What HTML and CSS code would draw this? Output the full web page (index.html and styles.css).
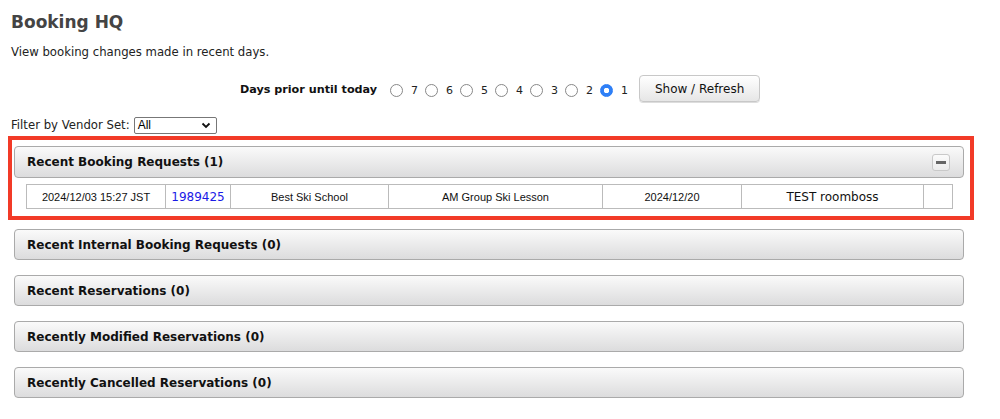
FILE: index.html
```html
<!DOCTYPE html>
<html>
<head>
<meta charset="utf-8">
<title>Booking HQ</title>
<link rel="stylesheet" href="styles.css">
</head>
<body>
<h1 class="title">Booking HQ</h1>
<p class="desc">View booking changes made in recent days.</p>

<form class="days-row">
  <span class="days-label">Days prior until today</span>
  <label class="opt"><span class="radio"></span>7</label>
  <label class="opt"><span class="radio"></span>6</label>
  <label class="opt"><span class="radio"></span>5</label>
  <label class="opt"><span class="radio"></span>4</label>
  <label class="opt"><span class="radio"></span>3</label>
  <label class="opt"><span class="radio"></span>2</label>
  <label class="opt"><span class="radio checked"></span>1</label>
  <span class="btn">Show / Refresh</span>
</form>

<div class="filter">
  <span>Filter by Vendor Set:</span>
  <span class="select"><span class="select-val">All</span><svg class="chev" width="10" height="7" viewBox="0 0 10 7"><path d="M1.5 1.5 L5 5 L8.5 1.5" fill="none" stroke="#111" stroke-width="1.8"/></svg></span>
</div>

<div class="highlight">
  <div class="panel">
    <div class="panel-head first">
      <span>Recent Booking Requests (1)</span>
      <span class="toggle"><span class="dash"></span></span>
    </div>
    <table class="rows">
      <tr>
        <td class="c1">2024/12/03 15:27 JST</td>
        <td class="c2"><a href="#">1989425</a></td>
        <td class="c3">Best Ski School</td>
        <td class="c4">AM Group Ski Lesson</td>
        <td class="c5">2024/12/20</td>
        <td class="c6 big">TEST roomboss</td>
        <td class="c7"></td>
      </tr>
    </table>
  </div>
</div>

<div class="panels">
  <div class="panel-head">Recent Internal Booking Requests (0)</div>
  <div class="panel-head">Recent Reservations (0)</div>
  <div class="panel-head">Recently Modified Reservations (0)</div>
  <div class="panel-head">Recently Cancelled Reservations (0)</div>
</div>
</body>
</html>
```

FILE: styles.css
```css
body {
  margin: 8px;
  font-family: "DejaVu Sans", sans-serif;
  font-size: 11.7px;
  color: #222;
  background: #fff;
}
.title {
  font-size: 17px;
  font-weight: bold;
  color: #444;
  margin: 3px 0 0 3px;
  line-height: 22px;
}
.desc {
  margin: 12px 0 0 3px;
  line-height: 14px;
  color: #222;
}
.days-row {
  display: flex;
  justify-content: center;
  align-items: center;
  margin: 16px 0 0 0;
  height: 27px;
}
.days-label {
  font-weight: bold;
  font-size: 11.2px;
  margin-right: 13px;
  margin-top: 2px;
  color: #111;
}
.opt {
  display: flex;
  align-items: center;
  margin-top: 3px;
  width: 35px;
  font-size: 11px;
}
.radio {
  width: 11px;
  height: 11px;
  border: 1px solid #888;
  border-radius: 50%;
  margin-right: 8px;
  background: #fff;
  box-sizing: content-box;
}
.radio.checked {
  border-color: #2a7cf6;
  background: radial-gradient(circle, #fff 0 2.5px, #2f80f7 3px);
}
.btn {
  display: inline-flex;
  align-items: center;
  justify-content: center;
  width: 119px;
  height: 25px;
  border: 1px solid #c8c8c8;
  border-radius: 4px;
  background: linear-gradient(#ffffff, #e6e6e6);
  font-size: 12px;
  color: #111;
  margin-left: 4px;
  box-shadow: 0 1px 0 #ddd;
}
.filter {
  display: flex;
  align-items: center;
  margin: 14px 0 0 3px;
  height: 18px;
}
.select {
  display: inline-flex;
  align-items: center;
  justify-content: space-between;
  box-sizing: border-box;
  width: 83px;
  height: 17px;
  border: 1px solid #777;
  border-radius: 2px;
  margin-left: 4px;
  padding: 0 5px 0 3px;
  font-family: "Liberation Sans", sans-serif;
  font-size: 12px;
  color: #000;
}
.highlight {
  width: 956px;
  border: 4px solid #f23a27;
  padding: 6px 0 7px 2px;
  margin-top: 2px;
}
.panel-head {
  box-sizing: border-box;
  width: 950px;
  height: 31px;
  border: 1px solid #aaa;
  border-radius: 4px;
  background: linear-gradient(#fafafa, #dcdcdd);
  display: flex;
  align-items: center;
  justify-content: space-between;
  padding: 0 13px 0 12px;
  font-weight: bold;
  font-size: 12px;
  color: #111;
}
.panel-head.first {
  height: 32px;
}
.toggle {
  width: 16px;
  height: 15px;
  border: 1px solid #c9c9c9;
  border-radius: 3px;
  background: linear-gradient(#fbfbfb, #ececec);
  display: flex;
  align-items: center;
  justify-content: center;
}
.dash {
  width: 10px;
  height: 3px;
  background: #666;
}
.rows {
  border-collapse: collapse;
  table-layout: fixed;
  margin: 6px 0 0 12px;
  width: 926px;
  font-family: "Liberation Sans", sans-serif;
  font-size: 11px;
  color: #111;
}
.rows td {
  border: 1px solid #bbb;
  height: 23px;
  padding: 0;
  text-align: center;
}
.rows a {
  color: #1a1ae6;
  text-decoration: none;
  font-family: "DejaVu Sans", sans-serif;
  font-size: 12px;
}
.rows .big {
  font-family: "DejaVu Sans", sans-serif;
  font-size: 12px;
}
.c1 { width: 138px; }
.c2 { width: 64px; }
.c3 { width: 157px; }
.c4 { width: 213px; }
.c5 { width: 138px; }
.c6 { width: 181px; }
.c7 { width: 28px; }
.panels {
  margin: 9px 0 0 6px;
}
.panels .panel-head {
  margin-bottom: 15px;
}
```
